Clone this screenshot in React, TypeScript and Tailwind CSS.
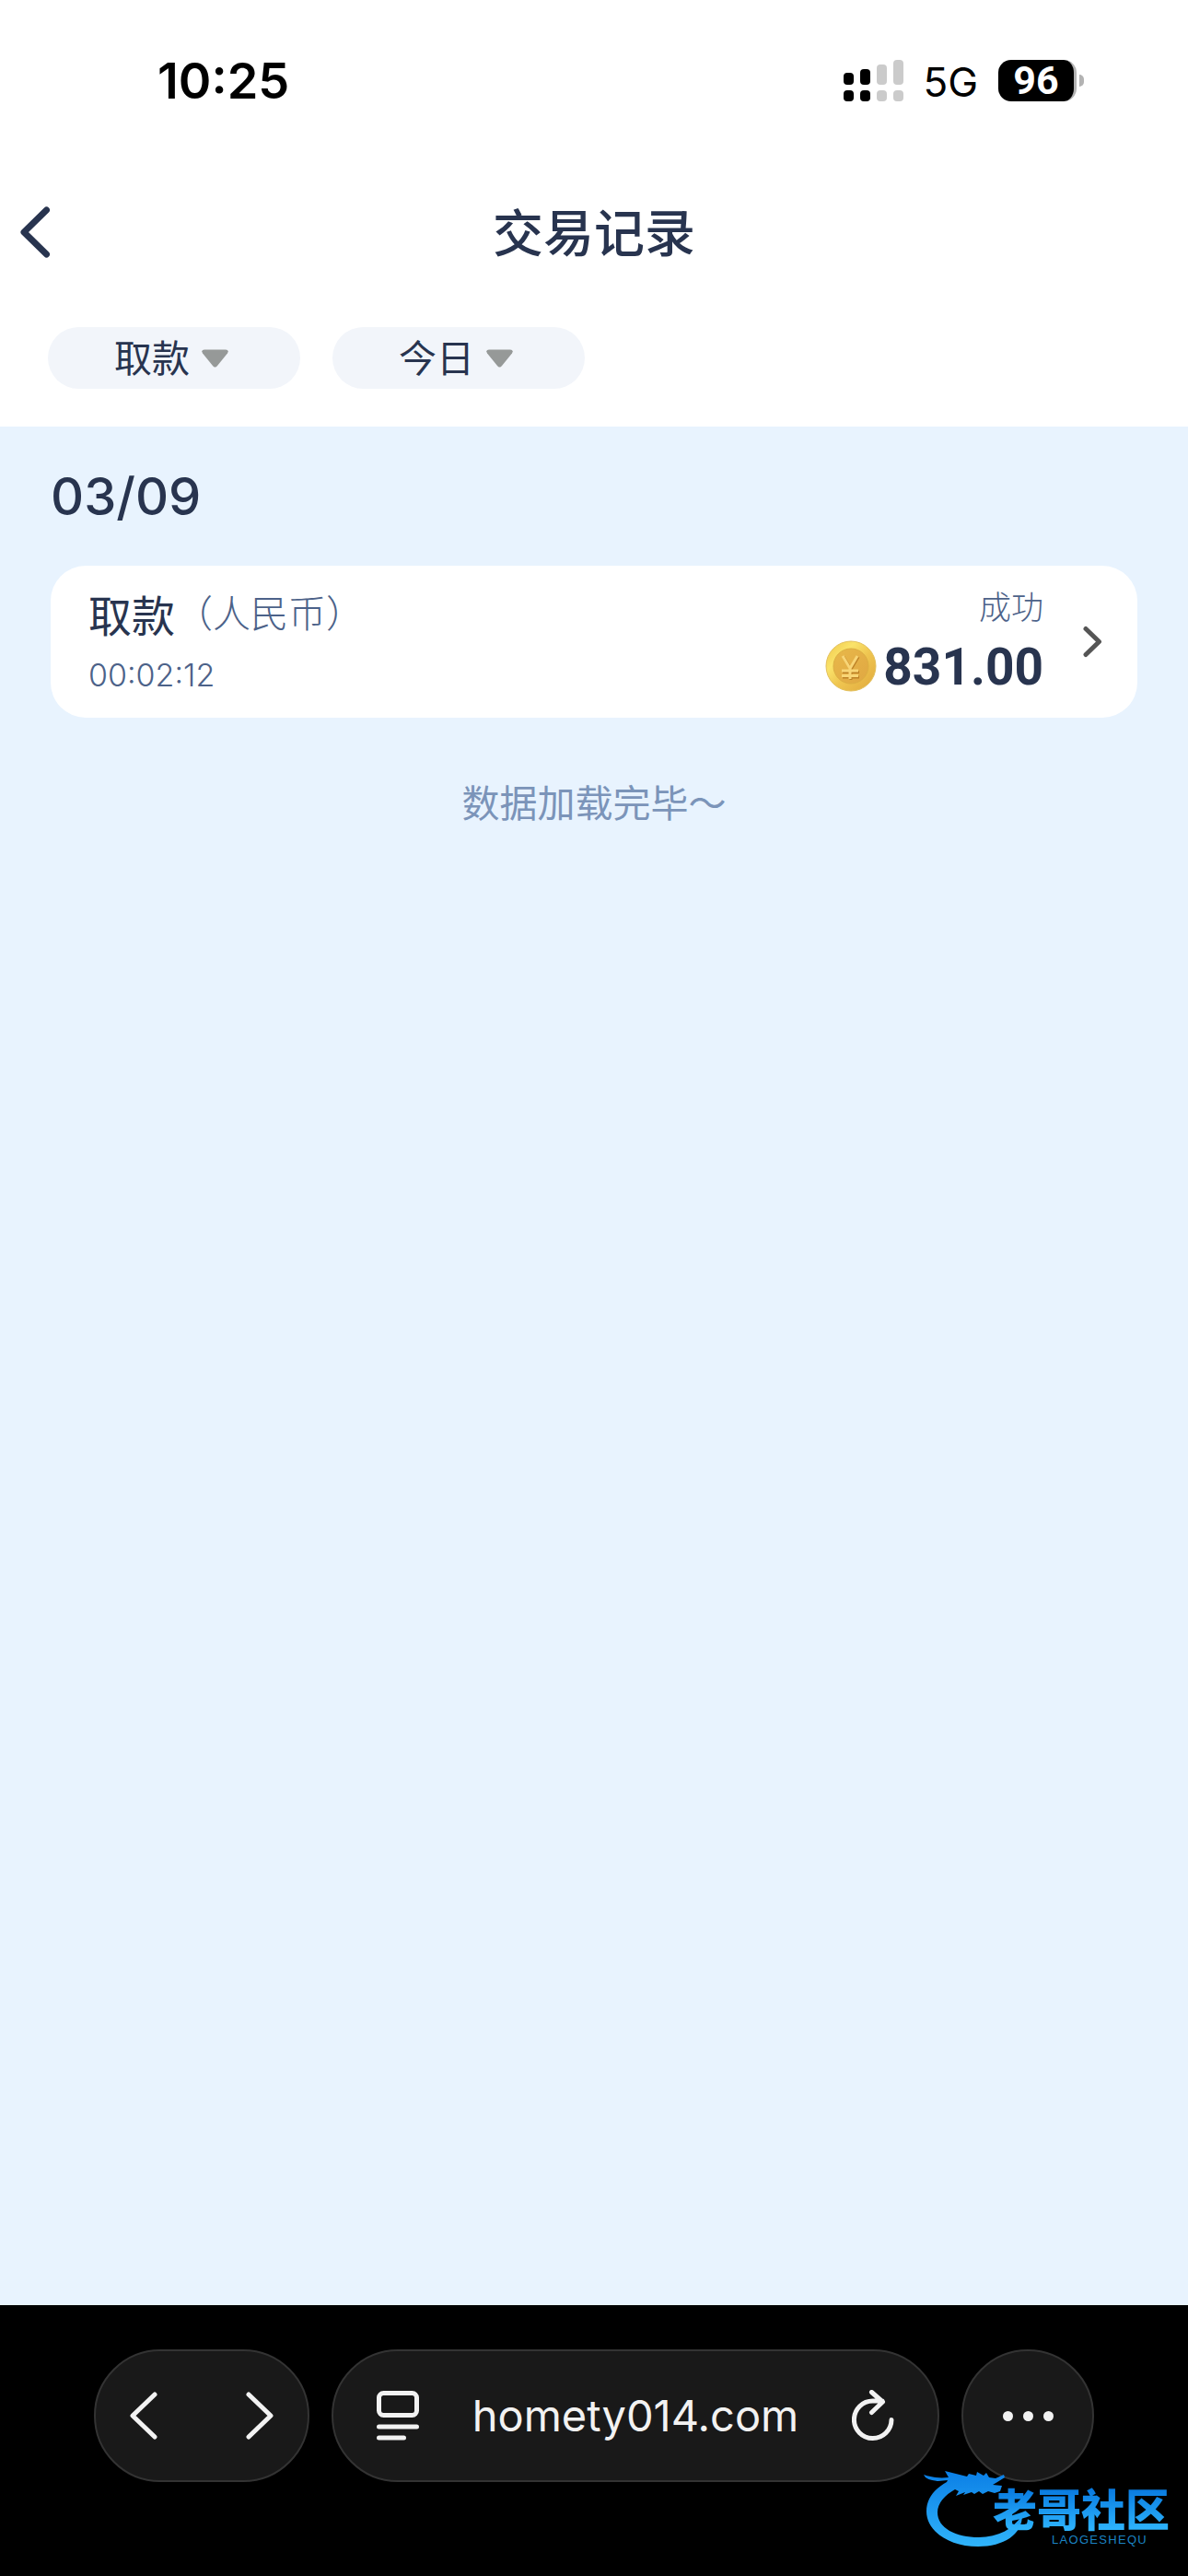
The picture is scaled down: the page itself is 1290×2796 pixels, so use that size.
import React from 'react';

const filters = [
  { label: '交易类型', options: ['取款', '存款'] },
  { label: '日期', options: ['今日', '昨日'] },
];

function StatusBar() {
  return (
    <div className="flex h-44 items-start justify-between pl-[171px] pr-[113px] pt-[61px] text-black">
      <time className="text-[54px] leading-[54px] font-semibold">10:25</time>
      <div className="flex items-center pt-[2px]">
        <svg className="h-[45px] w-[65px]" viewBox="0 0 65 45" aria-hidden="true">
          <g fill="#000">
            <rect x="0" y="14" width="11" height="13" rx="4" />
            <rect x="0" y="33" width="11" height="12" rx="4" />
            <rect x="18" y="10" width="11" height="17" rx="4" />
            <rect x="18" y="33" width="11" height="12" rx="4" />
          </g>
          <g fill="#cbcbcb">
            <rect x="36" y="5" width="11" height="22" rx="4" />
            <rect x="36" y="33" width="11" height="12" rx="4" />
            <rect x="54" y="0" width="11" height="27" rx="4" />
            <rect x="54" y="33" width="11" height="12" rx="4" />
          </g>
        </svg>
        <span className="ml-[21px] pt-1 text-[44px] leading-[44px]">5G</span>
        <div className="ml-[22px] flex h-[45px] w-[85px] items-center justify-center rounded-[14px] border-r-[3px] border-[#b3b3b3] bg-black font-[Roboto] text-[43px] leading-[45px] font-bold text-white">
          96
        </div>
        <div className="ml-[3px] h-[13px] w-[5px] rounded-r-full bg-[#b3b3b3]" />
      </div>
    </div>
  );
}

function Header() {
  return (
    <header className="bg-white text-[#28344f]">
      <StatusBar />
      <div className="flex h-[152px] items-center">
        <button className="flex flex-1 justify-start px-[21px]" aria-label="返回">
          <svg className="h-[58px] w-[34px]" viewBox="0 0 34 58" fill="none" stroke="currentColor" strokeWidth="7" strokeLinecap="round" strokeLinejoin="round">
            <path d="M29.500 5 5 29l24.500 24" />
          </svg>
        </button>
        <h1 className="pt-[2px] text-[55px] leading-[64px] font-medium">交易记录</h1>
        <div className="flex-1 px-[21px]" />
      </div>
      <div className="flex gap-[35px] px-[52px] pt-[27px] pb-[41px]">
        {filters.map((f) => (
          <label key={f.label} className="relative flex h-[67px] w-[274px] items-center rounded-full bg-[#f2f5fa]">
            <select aria-label={f.label} className="h-full w-full appearance-none rounded-full bg-transparent pt-[2px] pl-[72px] text-[41px]">
              {f.options.map((o) => (
                <option key={o}>{o}</option>
              ))}
            </select>
            <svg className="pointer-events-none absolute top-6 right-[78px] h-5 w-[29px]" viewBox="0 0 29 20" fill="#969998" aria-hidden="true">
              <path d="M3 0.500h23q4 0 2 4L17 18q-2.500 3-5 0L1 4.500q-2-4 2-4Z" />
            </svg>
          </label>
        ))}
      </div>
    </header>
  );
}

function Coin() {
  return (
    <svg className="h-14 w-14" viewBox="0 0 56 56" aria-hidden="true">
      <defs>
        <linearGradient id="rim" x1="0" y1="0" x2="1" y2="1">
          <stop offset="0" stopColor="#efc548" />
          <stop offset="0.300" stopColor="#fae36a" />
          <stop offset="0.550" stopColor="#efc550" />
          <stop offset="1" stopColor="#e0a83c" />
        </linearGradient>
        <linearGradient id="face" x1="0" y1="0" x2="1" y2="1">
          <stop offset="0" stopColor="#e8b84a" />
          <stop offset="1" stopColor="#e0a742" />
        </linearGradient>
      </defs>
      <circle cx="28" cy="28" r="27" fill="url(#rim)" stroke="#e3c05c" />
      <circle cx="28" cy="28" r="19" fill="url(#face)" stroke="#dcae42" />
      <g fill="none" strokeLinejoin="round">
        <path stroke="#bd8126" strokeWidth="3" d="M20 18l8 13.500 8-13.500M28 32v11M19 34.500h18M19 40h18" />
        <path stroke="#f8d576" strokeWidth="3" d="M19 17l8 13.500 8-13.500M27 31v11M18 33h18M18 38.500h18" />
      </g>
    </svg>
  );
}

function Transaction() {
  return (
    <a href="#detail" className="flex h-[165px] items-center justify-between rounded-[38px] bg-white pl-[41px] pr-[38px]">
      <div>
        <div className="flex items-start text-[47px] leading-[56px] text-[#28344f]">
          <span className="pt-[2px]">取款</span>
          <span className="text-[41px] leading-[54px] font-light text-[#4c6289]">（人民币）</span>
        </div>
        <time className="block pt-[14px] text-[34px] leading-[44px] font-light text-[#4c6289]">00:02:12</time>
      </div>
      <div className="flex items-center gap-[43px]">
        <div className="flex flex-col items-end">
          <span className="text-[35px] leading-[38px] font-light text-[#4c6289]">成功</span>
          <div className="flex items-center gap-[7px] pt-[14px]">
            <Coin />
            <span className="pt-[2px] font-[Roboto] text-[55px] leading-[60px] font-bold text-[#28344f]">831.00</span>
          </div>
        </div>
        <svg className="h-[35px] w-[21px]" viewBox="0 0 21 35" fill="none" stroke="#555" strokeWidth="5" strokeLinecap="round" strokeLinejoin="round" aria-hidden="true">
          <path d="M3 3.500 17.500 17.500 3 31.500" />
        </svg>
      </div>
    </a>
  );
}

function BrowserBar() {
  const glass = 'flex h-36 items-center rounded-full border-2 border-[#333333] bg-[#191919]';
  return (
    <nav className="relative flex h-[294px] items-start gap-6 bg-black px-[102px] pt-12 text-[#f2f2f2]">
      <div className={glass + ' w-[234px] justify-between px-[37px]'}>
        <button aria-label="后退">
          <svg className="h-[52px] w-[30px]" viewBox="0 0 30 52" fill="none" stroke="currentColor" strokeWidth="5" strokeLinecap="round" strokeLinejoin="round">
            <path d="M27 3 3 26l24 23" />
          </svg>
        </button>
        <button aria-label="前进">
          <svg className="h-[52px] w-[30px]" viewBox="0 0 30 52" fill="none" stroke="currentColor" strokeWidth="5" strokeLinecap="round" strokeLinejoin="round">
            <path d="M3 3l24 23L3 49" />
          </svg>
        </button>
      </div>
      <div className={glass + ' flex-1 justify-between px-[47px]'}>
        <button aria-label="页面菜单">
          <svg className="h-[54px] w-[46px]" viewBox="0 0 46 54" fill="none" stroke="currentColor" strokeWidth="5" strokeLinecap="round">
            <rect x="2.500" y="2.500" width="41" height="24" rx="5" />
            <path d="M2.500 39h41M2.500 51h27" />
          </svg>
        </button>
        <span className="text-[47px] leading-[56px]">homety014.com</span>
        <button aria-label="刷新">
          <svg className="h-[56px] w-[46px]" viewBox="0 0 46 56" fill="none" stroke="currentColor" strokeWidth="5" strokeLinecap="round" strokeLinejoin="round">
            <path d="M43 32.500a20.300 20.300 0 1 1-20-20.500H33M21.500 2.500l12 10.500-12 11.500" />
          </svg>
        </button>
      </div>
      <button aria-label="更多" className={glass + ' w-36 justify-center gap-[11px]'}>
        <span className="size-[11px] rounded-full bg-current" />
        <span className="size-[11px] rounded-full bg-current" />
        <span className="size-[11px] rounded-full bg-current" />
      </button>
      <Watermark />
    </nav>
  );
}

function Watermark() {
  return (
    <div className="pointer-events-none absolute right-5 bottom-[28px] h-[95px] w-[268px]">
      <svg className="absolute inset-0 h-[95px] w-[112px]" viewBox="0 0 112 95" aria-hidden="true">
        <defs>
          <linearGradient id="dragon" x1="0" y1="0" x2="0" y2="1">
            <stop offset="0" stopColor="#0b7fe6" />
            <stop offset="1" stopColor="#30b4fa" />
          </linearGradient>
        </defs>
        <path
          fill="url(#dragon)"
          d="M26 21C12 29 4 39 4 53 4 74 28 91 60 91c28 0 48-13 48-34C98 72 82 81 61 81 36 81 16 71 16 54 16 44 24 35 35 29L39 31 36 36 46 32 44 35 53 32 56 34 61 31 65 34 71 31 78 33 84 31 86 25 76 24 81 21 89 16 88 13 79 17 72 16 69 11 66 14 59 10 58 14 50 12 48 15 24 9 28 16C18 17 10 16 1 13q2 6 16 7l10-1Z"
        />
      </svg>
      <div className="absolute top-[27px] right-0 flex flex-col items-end">
        <span className="block bg-gradient-to-b from-[#0878df] to-[#31b9ff] bg-clip-text text-[48px] leading-[50px] font-black text-transparent">
          老哥社区
        </span>
        <span className="block pr-6 font-['Liberation_Sans'] text-[13px] leading-[14px] tracking-widest text-[#1b83c4]">LAOGESHEQU</span>
      </div>
    </div>
  );
}

export default function App() {
  return (
    <div className="flex min-h-screen flex-col bg-[#e8f3fe] font-[Inter,'Noto_Sans_CJK_SC',sans-serif]">
      <Header />
      <main className="flex-1 px-[55px] pt-11">
        <h2 className="text-[56px] leading-[64px] font-medium text-[#28344f]">03/09</h2>
        <div className="pt-[43px]">
          <Transaction />
        </div>
        <p className="pt-[63px] text-center text-[41px] leading-[60px] text-[#7b94b9]">数据加载完毕～</p>
      </main>
      <BrowserBar />
    </div>
  );
}
